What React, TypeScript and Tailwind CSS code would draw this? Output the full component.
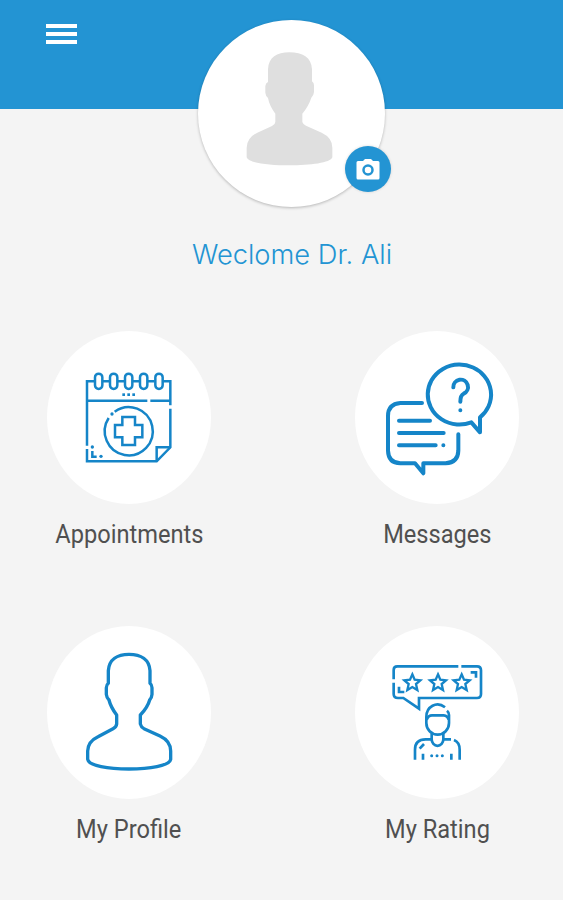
import React from 'react';

const STAR = 'M0 -24 L7 -8 L24 -6 L11 5 L15 23 L0 14 L-15 23 L-11 5 L-24 -6 L-7 -8 Z';

const AppointmentsIcon = () => (
  <svg viewBox="-69 -87 492 519" className="h-full w-full" fill="none" stroke="#1585c8" strokeWidth="7.5">
    <path d="M51 257V64H74M98 64H119M143 64H164M188 64H209M233 64H254M279 64H301V136M301 146V262L260 304H51V267" />
    <path d="M54 122H232M241 122H301M260 304V262H301" />
    {[86, 131, 176, 221, 267].map((x) => (
      <rect key={x} x={x - 11} y="41" width="22" height="46" rx="11" />
    ))}
    <path d="M134 155A72 72.500 0 1 1 116 174" />
    <path d="M157 171H195V195H217V232H195V255H157V232H135V195H157Z" />
    <path d="M67 273V290H80" />
    <g fill="#1585c8" stroke="none">
      <rect x="157" y="100" width="8" height="8" />
      <rect x="172" y="100" width="8" height="8" />
      <rect x="187" y="100" width="8" height="8" />
      <circle cx="126" cy="162" r="5" />
      <circle cx="67" cy="261" r="5" />
      <circle cx="93" cy="289" r="5" />
    </g>
  </svg>
);

const MessagesIcon = () => (
  <svg
    viewBox="-60 -57 492 519"
    className="h-full w-full"
    fill="none"
    stroke="#1585c8"
    strokeWidth="12"
    strokeLinecap="round"
    strokeLinejoin="round"
  >
    <path d="M141 159H76Q39 162 39 198V302Q40 339 76 340H120L145 370V340H212Q249 338 250 302V253" />
    <path d="M72 212H165M72 249H206M72 286H182M205 286H205.1" />
    <path d="M289 217A95 90 0 1 1 315 202V247Z" />
    <path d="M235 112A22 22 0 1 1 266 131Q256 136 256 155M256 181V181.1" />
  </svg>
);

const ProfileIcon = () => (
  <svg viewBox="-69 -42 492 519" className="h-full w-full" fill="none" stroke="#1585c8" strokeWidth="10" strokeLinejoin="round">
    <path d="M115 130V92C117 58 142 43 177 43C213 43 238 58 240 92V130Q246 135 246 143V163Q245 174 239 180Q233 202 211 225V252Q213 261 222 266L270 288Q302 303 302 333V358C298 378 238 387 177 387C116 387 56 378 53 358V333Q54 304 84 290L129 266Q139 261 140 252V225Q122 201 117 180Q110 173 109 163V143Q109 135 115 130Z" />
  </svg>
);

const RatingIcon = () => (
  <svg viewBox="-75 -87 492 519" className="h-full w-full" fill="none" stroke="#1585c8" strokeWidth="8">
    <path d="M41 73V45Q41 34 52 34H235M244 34H291Q303 34 303 46V117Q303 129 291 129H117V161L70 129H54Q41 129 41 117V83" />
    <path d="M57 95V111H73M272 52H288V68" />
    <g strokeWidth="7">
      <path d={STAR} transform="translate(97 82)" />
      <path d={STAR} transform="translate(174 82)" />
      <path d={STAR} transform="translate(245 82)" />
    </g>
    <path d="M195 157C170 137 139 155 139 186V204A34 35 0 0 0 207 204V180Q207 172 201 167" />
    <path d="M140 194Q145 181 156 181H191Q203 182 206 194" />
    <path d="M155 237V253A17 19 0 0 0 190 253V237" />
    <path d="M105 314V284Q105 253 137 253H155M190 253H213M222 255Q239 262 239 284V314M119 281L132 267M129 296V314M214 296V314" />
    <g fill="#1585c8" stroke="none">
      <circle cx="155" cy="302" r="4.5" />
      <circle cx="171" cy="302" r="4.5" />
      <circle cx="187" cy="302" r="4.5" />
    </g>
  </svg>
);

interface TileProps {
  label: string;
  icon: React.ReactNode;
}

const Tile: React.FC<TileProps> = ({ label, icon }) => (
  <button className="flex h-[295px] w-[164px] flex-col items-center">
    <span className="h-[173px] w-[164px] shrink-0 rounded-[50%] bg-white">{icon}</span>
    <span className="mt-[15px] scale-x-[0.945] text-[25px] leading-8 whitespace-nowrap text-[#505050]">{label}</span>
  </button>
);

const App: React.FC = () => {
  return (
    <div className="h-[900px] w-full overflow-hidden bg-[#f4f4f4] font-['Roboto',sans-serif]">
      <header className="flex h-[109px] items-start bg-[#2394d3]">
        <button className="mt-6 ml-[46px] flex w-[31px] flex-col gap-1" aria-label="Menu">
          <span className="h-1 w-full bg-white" />
          <span className="h-1 w-full bg-white" />
          <span className="h-1 w-full bg-white" />
        </button>
      </header>

      <div className="relative mx-auto -mt-[89px] h-[187px] w-[187px] translate-x-[10px] rounded-full bg-white shadow-[0_1px_3px_rgba(0,0,0,0.25)]">
        <svg viewBox="54 60 561 561" className="h-full w-full" fill="#dfdfdf">
          <path d="M264 246V208C266 172 290 157 328 157C368 157 394 172 396 208V244Q402 248 402 256V276Q401 287 394 293Q386 318 367 341V366Q369 373 378 377L425 398Q457 413 457 443V472C452 489 390 496 328 496C266 496 205 489 200 472V443Q201 413 232 398L276 378Q286 373 286 366V341Q268 317 264 294Q257 288 256 278V258Q257 249 264 246Z" />
        </svg>
        <button
          className="absolute top-[126px] left-[147px] flex h-[46px] w-[46px] items-center justify-center rounded-full bg-[#2394d3] shadow-[0_0_3px_rgba(0,0,0,0.15)]"
          aria-label="Change photo"
        >
          <svg viewBox="0 0 24 22" className="h-[22px] w-6" fill="none">
            <path d="M2 3H7L9 1H15L17 3H22Q23.500 3 23.500 4.500V20Q23.500 21.500 22 21.500H2Q.5 21.500 .5 20V4.500Q.5 3 2 3Z" fill="#fff" />
            <circle cx="12" cy="12" r="4.500" stroke="#2394d3" strokeWidth="2.500" />
          </svg>
        </button>
      </div>

      <h1 className="mt-7 ml-[21px] text-center font-['Inter',sans-serif] text-[27.3px] leading-10 font-light text-[#2394d3]">
        Weclome Dr. Ali
      </h1>

      <main className="mt-14 grid grid-cols-[164px_164px] justify-start gap-x-36 pl-[47px]">
        <Tile label="Appointments" icon={<AppointmentsIcon />} />
        <Tile label="Messages" icon={<MessagesIcon />} />
        <Tile label="My Profile" icon={<ProfileIcon />} />
        <Tile label="My Rating" icon={<RatingIcon />} />
      </main>
    </div>
  );
};

export default App;
